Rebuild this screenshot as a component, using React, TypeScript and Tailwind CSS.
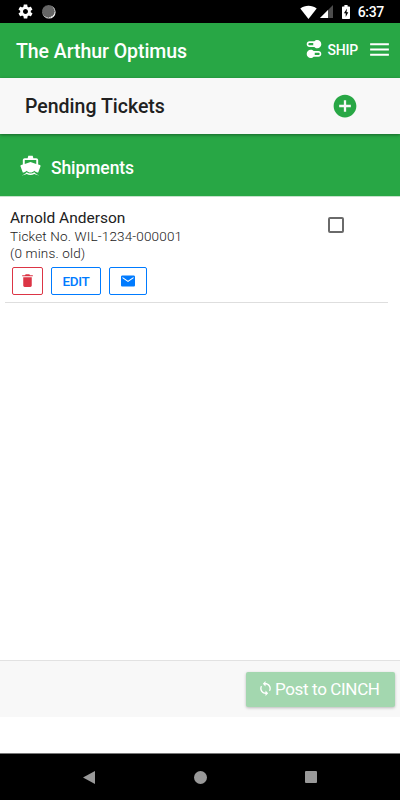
import {
  IoMdAddCircle,
  IoMdBoat,
  IoMdMail,
  IoMdMenu,
  IoMdSettings,
  IoMdSwitch,
  IoMdSync,
  IoMdTrash,
} from 'react-icons/io';

const tickets = [
  { name: 'Arnold Anderson', ticketNo: 'WIL-1234-000001', age: '(0 mins. old)' },
];

const StatusBar = () => (
  <div className="flex h-[23px] shrink-0 items-center justify-between bg-black pl-[17px] pr-[16px] text-white">
    <div className="flex items-center gap-[8px]">
      <IoMdSettings className="h-[17px] w-[17px]" />
      <svg className="h-[14px] w-[14px]" viewBox="0 0 14 14">
        <circle cx="7" cy="7" r="6.6" fill="#f2f2f2" />
        <circle cx="6.3" cy="6.3" r="6.1" fill="#666" stroke="#444" strokeWidth="0.8" strokeDasharray="1.2 1" />
      </svg>
    </div>
    <div className="flex items-center">
      <svg className="h-[14px] w-[17px]" viewBox="0 0 17 14">
        <path d="M8.5 14 0.3 3.5C5 -0.3 12 -0.3 16.7 3.5Z" fill="#fff" />
      </svg>
      <svg className="ml-[3px] h-[13px] w-[13px]" viewBox="0 0 13 13">
        <path d="M13 0V13H0Z" fill="#4c4c4c" />
        <path d="M8 5V13H0Z" fill="#fff" />
      </svg>
      <svg className="ml-[9px] h-[14px] w-[8px]" viewBox="0 0 8 14">
        <path d="M2.4 0h3.2v1.5H7.3q.7 0 .7.7v11.1q0 .7-.7.7H.7Q0 14 0 13.3V2.2q0-.7.7-.7h1.7Z" fill="#fff" />
        <path d="M5 3.6 1.9 8.2H3.7V12L6.3 7.2H4.5Z" fill="#000" />
      </svg>
      <span className="ml-[8px] pt-[2px] text-[14px] leading-[21px] tracking-[-0.3px] font-medium">6:37</span>
    </div>
  </div>
);

const NavigationBar = () => (
  <div className="grid h-[47px] shrink-0 grid-cols-[88px_1fr_88px] items-center border-t border-[#777] bg-black pl-[45px] pr-[45px]">
    <svg className="mx-auto h-[13px] w-[12px]" viewBox="0 0 12 13">
      <path d="M0 6.5 12 0V13Z" fill="#999" />
    </svg>
    <div className="mx-auto h-[13px] w-[13px] rounded-full bg-[#999]" />
    <div className="mx-auto h-[12px] w-[12px] rounded-[1px] bg-[#999]" />
  </div>
);

const App = () => {
  return (
    <div className="flex h-[800px] w-[400px] flex-col overflow-hidden bg-white font-['Roboto',sans-serif] text-[#212121]">
      <StatusBar />

      {/* App header */}
      <header className="z-10 flex h-[55px] shrink-0 items-center bg-[#28a745] pl-[16px] pr-[8px] text-white shadow-[0_1px_4px_rgba(0,0,0,0.4)]">
        <h1 className="flex-1 pt-[2px] text-[19.5px] tracking-[-0.05px] font-medium">The Arthur Optimus</h1>
        <IoMdSwitch className="mb-[3px] h-[26px] w-[26px]" />
        <span className="text-[14px] tracking-[-0.2px] font-medium">SHIP</span>
        <IoMdMenu className="mb-[2px] ml-[9px] h-[25px] w-[25px]" />
      </header>

      {/* Page title */}
      <div className="z-10 flex h-[56px] shrink-0 items-center bg-[#f8f8f8] pl-[25px] pr-[41px] shadow-[0_1px_3px_rgba(0,0,0,0.4)]">
        <h2 className="flex-1 pt-[1px] text-[19.5px] font-medium">Pending Tickets</h2>
        <IoMdAddCircle className="mb-px h-[28px] w-[28px] text-[#28a745]" />
      </div>

      {/* Section header */}
      <div className="flex h-[62px] shrink-0 items-center bg-[#28a745] pl-[19px] text-white">
        <IoMdBoat className="h-[23px] w-[23px]" />
        <span className="ml-[9px] pt-[6px] text-[17.5px] tracking-[-0.1px] font-medium">Shipments</span>
      </div>

      <main className="flex-1 border-t border-[#c6e2cc] bg-white">
        {tickets.map((ticket) => (
          <div key={ticket.ticketNo} className="ml-[5px] mr-[12px] flex h-[106px] border-b border-[#dedede] pl-[5px] pt-[12px]">
            <div className="flex-1">
              <p className="text-[15.5px] leading-[19px]">{ticket.name}</p>
              <p className="text-[13.5px] leading-[16px] tracking-[0.15px] font-light">Ticket No. {ticket.ticketNo}</p>
              <p className="text-[13.5px] leading-[18px] tracking-[0.15px] font-light">{ticket.age}</p>
              <div className="ml-[2px] mt-[5px] flex gap-[8px]">
                <button className="flex h-[28px] w-[31px] items-center justify-center rounded-[2px] border border-[#dc3545] text-[#dc3545]">
                  <IoMdTrash className="mr-px mb-px h-[17px] w-[17px]" />
                </button>
                <button className="flex h-[28px] w-[50px] items-center justify-center rounded-[2px] border border-[#007bff] text-[13.5px] tracking-[-0.3px] font-medium text-[#007bff]">
                  EDIT
                </button>
                <button className="flex h-[28px] w-[38px] items-center justify-center rounded-[2px] border border-[#007bff] text-[#007bff]">
                  <IoMdMail className="h-4 w-4" />
                </button>
              </div>
            </div>
            <div className="mr-[44px] mt-[8px] h-[16px] w-[16px] rounded-[2px] border-2 border-[#6a6a6a]" />
          </div>
        ))}
      </main>

      <footer className="flex h-[57px] shrink-0 items-start justify-end border-t border-[#e2e2e2] bg-[#f8f8f8] pr-[5px] pt-[11px]">
        <button className="flex h-[35px] w-[149px] items-center pl-[11px] rounded-[2px] bg-[#a3d7af] text-[17px] tracking-[-0.35px] text-white shadow-[0_1px_3px_rgba(0,0,0,0.25)]">
          <IoMdSync className="mr-[1px] mb-[2px] h-[17px] w-[17px]" />
          Post to CINCH
        </button>
      </footer>
      <div className="h-[36px] shrink-0 bg-white" />

      <NavigationBar />
    </div>
  );
};

export default App;
